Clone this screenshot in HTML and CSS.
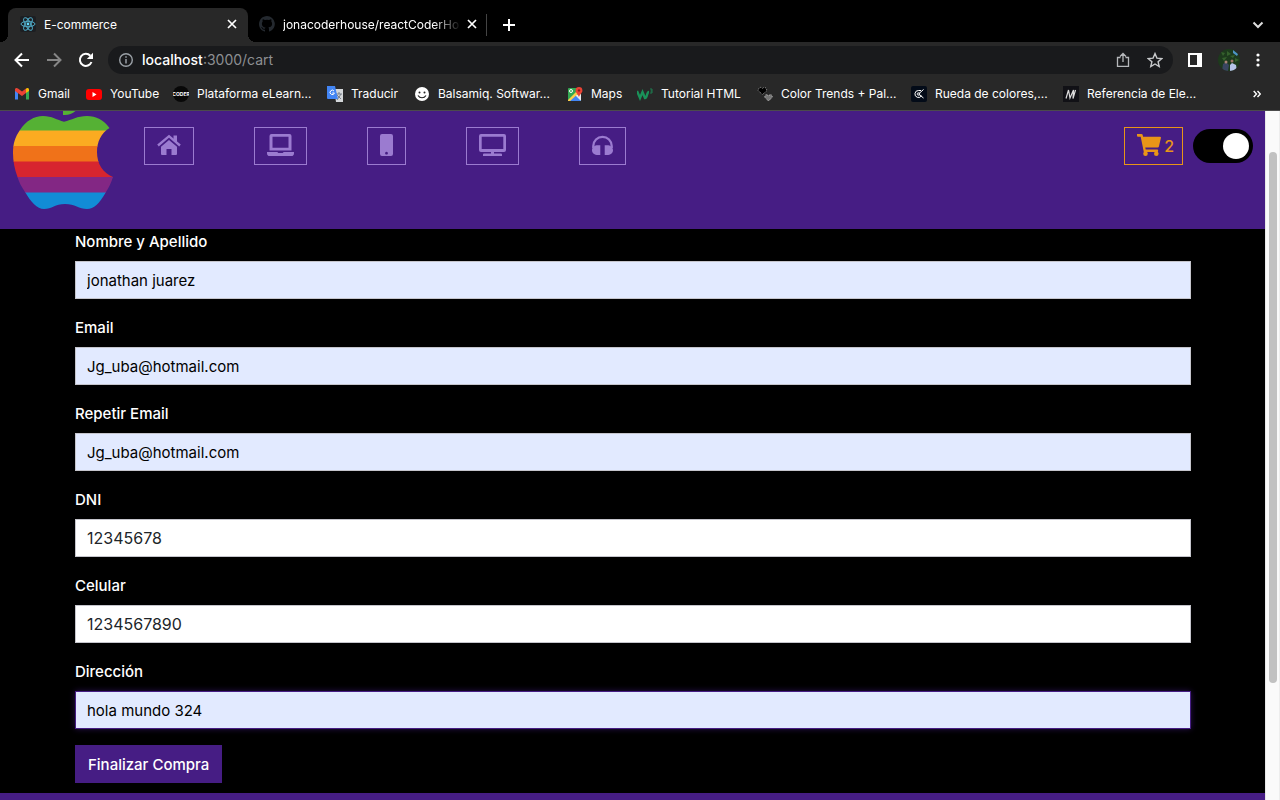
FILE: index.html
```html
<!DOCTYPE html>
<html lang="es">
<head>
<meta charset="utf-8">
<title>E-commerce</title>
<link rel="stylesheet" href="styles.css">
</head>
<body>
<div class="window">
  <div class="tabs">
    <div class="tab tab-active">
      <svg class="ico" viewBox="0 0 16 16"><rect width="16" height="16" rx="2" fill="#1c1e22"/><g fill="none" stroke="#4fa9c4" stroke-width="1"><ellipse cx="8" cy="8" rx="7" ry="2.7"/><ellipse cx="8" cy="8" rx="7" ry="2.7" transform="rotate(60 8 8)"/><ellipse cx="8" cy="8" rx="7" ry="2.7" transform="rotate(120 8 8)"/></g><circle cx="8" cy="8" r="1.4" fill="#61dafb"/></svg>
      <span class="tab-title">E-commerce</span>
      <button class="plain close" aria-label="Cerrar"><svg width="10" height="10" viewBox="0 0 10 10"><path d="M1 1l8 8M9 1l-8 8" stroke="#fff" stroke-width="1.7"/></svg></button>
    </div>
    <div class="tab tab-other">
      <svg class="ico" viewBox="0 0 16 16"><path fill="#24292f" d="M8 0C3.6 0 0 3.6 0 8c0 3.5 2.3 6.5 5.5 7.6.4.1.5-.2.5-.4v-1.5c-2.2.5-2.7-.9-2.7-.9-.4-.9-.9-1.2-.9-1.2-.7-.5.1-.5.1-.5.8.1 1.2.8 1.2.8.7 1.2 1.9.9 2.3.7.1-.5.3-.9.5-1.1-1.8-.2-3.6-.9-3.6-4 0-.9.3-1.6.8-2.1-.1-.2-.4-1 .1-2.1 0 0 .7-.2 2.2.8a7.7 7.7 0 0 1 4 0c1.5-1 2.2-.8 2.2-.8.4 1.1.2 1.9.1 2.1.5.6.8 1.3.8 2.1 0 3.1-1.9 3.7-3.7 3.9.3.3.6.8.6 1.5v2.2c0 .2.1.5.6.4A8 8 0 0 0 8 0z"/></svg>
      <span class="tab-title fade">jonacoderhouse/reactCoderHo</span>
      <button class="plain close" aria-label="Cerrar"><svg width="10" height="10" viewBox="0 0 10 10"><path d="M1 1l8 8M9 1l-8 8" stroke="#fff" stroke-width="1.7"/></svg></button>
    </div>
    <button class="plain add" aria-label="Nueva"><svg width="12" height="12" viewBox="0 0 12 12"><path d="M6 0v12M0 6h12" stroke="#fff" stroke-width="2"/></svg></button>
    <button class="plain more-tabs" aria-label="Buscar"><svg width="12" height="8" viewBox="0 0 12 8"><path d="M1.5 1.5L6 6l4.500-4.500" fill="none" stroke="#ddd" stroke-width="2"/></svg></button>
  </div>

  <div class="toolbar">
    <button class="plain" aria-label="Atrás"><svg class="ico" viewBox="0 0 16 16"><path d="M15 8H2M8 1.5L1.5 8 8 14.5" fill="none" stroke="#fff" stroke-width="2"/></svg></button>
    <button class="plain" aria-label="Adelante"><svg class="ico" viewBox="0 0 16 16"><path d="M1 8h13M8 1.5L14.5 8 8 14.5" fill="none" stroke="#868686" stroke-width="2"/></svg></button>
    <button class="plain" aria-label="Recargar"><svg class="ico" viewBox="0 0 16 16"><path d="M13.5 10A6 6 0 1 1 12.3 3.8" fill="none" stroke="#fff" stroke-width="2"/><path d="M15 0.8V7H8.8z" fill="#fff"/></svg></button>
    <div class="address">
      <svg class="ico" viewBox="0 0 16 16"><circle cx="8" cy="8" r="6.3" fill="none" stroke="#9aa0a6" stroke-width="1.4"/><path d="M8 7v4.500M8 4.3v1.5" stroke="#9aa0a6" stroke-width="1.5"/></svg>
      <span class="url"><b>localhost</b>:3000/cart</span>
      <button class="plain" aria-label="Compartir"><svg class="ico" viewBox="0 0 16 16"><path d="M5.500 5.500h-3v8.800h11V5.500h-3M8 10V1.800M5 4.500l3-3 3 3" fill="none" stroke="#b5b7ba" stroke-width="1.3"/></svg></button>
      <button class="plain" aria-label="Favorito"><svg class="ico" viewBox="0 0 16 16"><path d="M8 1.600l1.900 4.500 4.900.4-3.700 3.200 1.100 4.800L8 12l-4.200 2.500 1.100-4.800L1.200 6.500l4.900-.4z" fill="none" stroke="#c8cacc" stroke-width="1.4"/></svg></button>
    </div>
    <button class="plain" aria-label="Panel lateral"><svg width="14" height="14" viewBox="0 0 14 14"><path d="M0 0h14v14H0zM2 2v10h7V2z" fill="#fff" fill-rule="evenodd"/></svg></button>
    <button class="plain" aria-label="Perfil"><svg width="22" height="22" viewBox="0 0 22 22"><clipPath id="av"><circle cx="11" cy="11" r="11"/></clipPath><g clip-path="url(#av)"><rect width="22" height="22" fill="#1d3a1c"/><path d="M3 3l4 1-2 3zM9 2l4 3-4 2zM4 9l5-1-3 4zM12 7l5-1-2 3zM17 9l4 2-4 2z" fill="#35612c"/><path d="M15 1l5 4-1 2-4-3z" fill="#4d95c4"/><path d="M5 15l3-2 3 3-1 6H4z" fill="#39455f"/><circle cx="8" cy="13" r="1.500" fill="#a98275"/><path d="M12 16l2-2 4 2 1 6h-7z" fill="#b6c5e8"/><circle cx="14" cy="12" r="1.500" fill="#9d7768"/></g></svg></button>
    <button class="plain" aria-label="Menú"><svg width="4" height="14" viewBox="0 0 4 14" fill="#fff"><circle cx="2" cy="2" r="1.6"/><circle cx="2" cy="7" r="1.6"/><circle cx="2" cy="12" r="1.6"/></svg></button>
  </div>

  <nav class="bookmarks" aria-label="Marcadores">
    <a href="#"><svg class="ico" viewBox="0 0 16 16"><path d="M1 3v10.500h3V7z" fill="#4285f4"/><path d="M15 3v10.500h-3V7z" fill="#34a853"/><path d="M1 3.500C1 2 2.600 1.500 4 2.500l4 3 4-3V7L8 10 1 5z" fill="#ea4335"/><path d="M12 2.500c1.400-1 3-.5 3 1V5l-3 2z" fill="#fbbc04"/></svg>Gmail</a>
    <a href="#"><svg class="ico" viewBox="0 0 16 16"><rect y="3" width="16" height="11" rx="3" fill="#f00"/><path d="M6.500 6v5l4-2.500z" fill="#fff"/></svg>YouTube</a>
    <a href="#"><svg class="ico" viewBox="0 0 16 16"><circle cx="8" cy="8" r="8" fill="#080808"/><text x="8" y="10" class="coder" text-anchor="middle">CODER</text></svg>Plataforma eLearn...</a>
    <a href="#"><svg class="ico" viewBox="0 0 16 16"><path d="M7 3h9v13H9z" fill="#d4d7da"/><path d="M9 8h6M12 6v2M10 14l4-6M10 9l4 4" stroke="#777e88" fill="none"/><path d="M0 0h8l3 13H1q-1 0-1-1z" fill="#4285f4"/><path d="M7 5a2.200 2.200 0 1 0 .4 2H5.300" stroke="#fff" fill="none"/></svg>Traducir</a>
    <a href="#"><svg class="ico" viewBox="0 0 16 16"><circle cx="8" cy="8" r="7" fill="#fff"/><circle cx="5.500" cy="6.500" r="1" fill="#222"/><circle cx="10.500" cy="6.500" r="1" fill="#222"/><path d="M4 9.500c2 3 6 3 8 0" fill="none" stroke="#222" stroke-width="1.2"/></svg>Balsamiq. Softwar...</a>
    <a href="#"><svg class="ico" viewBox="0 0 16 16"><rect x="1" y="2" width="13" height="13" rx="1" fill="#34a853"/><path d="M14 8v6q0 1-1 1H3l6-6z" fill="#e8eaed"/><path d="M8 9l6 6H3z" fill="#4285f4"/><path d="M10 5l2 2-9 8H1v-1z" fill="#fbd04b"/><path d="M12 1a3.400 3.400 0 0 0-3.400 3.400C8.600 7 11 7.500 12 11c1-3.500 3.400-4 3.400-6.600A3.400 3.400 0 0 0 12 1z" fill="#ea4335"/><circle cx="12" cy="4.400" r="1.200" fill="#8c1d18"/><circle cx="4" cy="5" r="1.500" fill="none" stroke="#fff"/></svg>Maps</a>
    <a href="#"><svg class="ico" viewBox="0 0 16 16"><path d="M0 5l3 7 2.500-6L8 12c2.500 0 1.500-6 4-6" fill="none" stroke="#1a9159" stroke-width="2.4"/><path d="M13 3h2v4h-2M13.500 5H15" fill="none" stroke="#1a9159" stroke-width=".8"/></svg>Tutorial HTML</a>
    <a href="#"><svg class="ico" viewBox="0 0 16 16"><path d="M5.500 8.500L1 4.500 2 2l2-.8L5.500 2.500 7 1.200l2 .8 1 2.500z" fill="#000" stroke="#aaa" stroke-dasharray="1 1" stroke-width=".8"/><path d="M11.500 15L7.500 11 9 8.500l2.500 1 2.500-1 1.500 2.500z" fill="#777" stroke="#ddd" stroke-dasharray="1 1" stroke-width=".8"/></svg>Color Trends + Pal...</a>
    <a href="#"><svg class="ico" viewBox="0 0 16 16"><rect width="16" height="16" rx="2" fill="#030b18"/><path d="M10 4.500H7.500a3.500 3.500 0 1 0 3 5.200M12.500 3.500L7.500 8l5 4" fill="none" stroke="#fff"/><circle cx="7.500" cy="8" r="1.300" fill="none" stroke="#fff" stroke-width=".8"/></svg>Rueda de colores,...</a>
    <a href="#"><svg class="ico" viewBox="0 0 16 16"><rect width="16" height="16" fill="#111116"/><path d="M3 12.500L5.500 4l1.500 8 3.500-8-.5 8.500L12.500 4" fill="none" stroke="#ddd" stroke-width="1.2"/></svg>Referencia de Ele...</a>
    <button class="plain overflow" aria-label="Más marcadores"><svg width="8" height="8" viewBox="0 0 8 8"><path d="M.7 1l2.800 3L.7 7M4.500 1l2.800 3-2.800 3" fill="none" stroke="#fff" stroke-width="1.4"/></svg></button>
  </nav>

  <div class="viewport">
    <div class="page">
      <header class="header">
        <svg class="logo" viewBox="0 0 100 98" role="img" aria-label="Logo">
          <clipPath id="apple"><path d="M51 10.700C59 9 64 5 74 5c9 0 17 4 22.500 12C88 22 84 31 84 41c0 12 6 21 16 25-2 6-4 10-7 15-7 12-12 17-19 17-8 0-12-5-22-5s-13 5-21 5C24 98 18 91 12 81 8 75 6 71 4.500 66 1.500 58 0 50 0 42 0 33 2 26 7 19 13 10 21 5 30 5c9 0 14 4 21 5.700z"/></clipPath>
          <path d="M50 0h12.500C59 3 55 4.500 50 4z" fill="#55b134"/>
          <g clip-path="url(#apple)">
            <rect width="100" height="20" fill="#55b134"/>
            <rect y="19.500" width="100" height="16" fill="#fbab21"/>
            <rect y="35" width="100" height="16" fill="#f07219"/>
            <rect y="50.500" width="100" height="16" fill="#d7252f"/>
            <rect y="66" width="100" height="16" fill="#832784"/>
            <rect y="81.500" width="100" height="17" fill="#128cd6"/>
          </g>
        </svg>
        <nav class="categories" aria-label="Categorías">
          <a class="cat" href="#" aria-label="Inicio"><svg width="24" height="22" viewBox="0 0 24 22"><path d="M1 11.500L12 2.200l11 9.300" fill="none" stroke="currentColor" stroke-width="2.4"/><path d="M16.500 1.500h3.500V9l-3.500-3z" fill="currentColor"/><path d="M12 6l8 6.800V20q0 1-1 1h-4.500v-6h-5v6H5q-1 0-1-1v-7.200z" fill="currentColor"/></svg></a>
          <a class="cat" href="#" aria-label="Notebooks"><svg width="27" height="22" viewBox="0 0 27 22"><path d="M4.500 0h18q2 0 2 2v14.500h-22V2q0-2 2-2zM5.500 2.700v11.100h16V2.700z" fill="currentColor" fill-rule="evenodd"/><path d="M0 18h10.500q.2 1 1 1h4q.8 0 1-1H27v1.200q0 2.800-2.800 2.800H2.800Q0 22 0 19.200z" fill="currentColor"/></svg></a>
          <a class="cat" href="#" aria-label="Celulares"><svg width="13" height="22" viewBox="0 0 13 22"><path d="M2 0h9q2 0 2 2v18q0 2-2 2H2q-2 0-2-2V2q0-2 2-2zm4.500 17.800a1.400 1.400 0 1 0 .01 0z" fill="currentColor" fill-rule="evenodd"/></svg></a>
          <a class="cat" href="#" aria-label="Monitores"><svg width="27" height="22" viewBox="0 0 27 22"><path d="M2 0h23q2 0 2 2v14q0 2-2 2H2q-2 0-2-2V2q0-2 2-2zm.7 2.700v12.200h21.600V2.700z" fill="currentColor" fill-rule="evenodd"/><path d="M12 17.500h3v2h7q1 0 1 1V22H4v-1.500q0-1 1-1h7z" fill="currentColor"/></svg></a>
          <a class="cat" href="#" aria-label="Auriculares"><svg width="21" height="22" viewBox="0 0 21 22"><path d="M1.300 14v-2a9.200 9.200 0 0 1 18.400 0v2" fill="none" stroke="currentColor" stroke-width="2.3"/><path d="M8.300 11.300V21H6c-3.500 0-6-2-6-4.800s2.500-4.900 6-4.900zM12.700 11.300V21H15c3.500 0 6-2 6-4.800s-2.500-4.900-6-4.900z" fill="currentColor"/></svg></a>
        </nav>
        <a class="cart" href="#" aria-label="Carrito"><svg width="24" height="22" viewBox="0 0 24 22"><path d="M0 0h4.500q1 0 1.200 1l.4 1.800H23q1.200 0 .9 1.200l-2 8.600q-.2.900-1.200.9H8.300l.4 2h11.600q1 0 .8 1.200l-.3 1.300H6.800L3.700 2.800H1Q0 2.800 0 1.800z" fill="currentColor"/><circle cx="8.500" cy="19.700" r="2.300" fill="currentColor"/><circle cx="19.300" cy="19.700" r="2.300" fill="currentColor"/></svg><span>2</span></a>
        <input class="toggle" type="checkbox" aria-label="Modo oscuro" checked>
      </header>

      <form class="form">
        <div class="field"><label for="nombre">Nombre y Apellido</label><input class="filled" id="nombre" type="text" value="jonathan juarez"></div>
        <div class="field"><label for="email">Email</label><input class="filled" id="email" type="email" value="Jg_uba@hotmail.com"></div>
        <div class="field"><label for="email2">Repetir Email</label><input class="filled" id="email2" type="email" value="Jg_uba@hotmail.com"></div>
        <div class="field"><label for="dni">DNI</label><input id="dni" type="text" value="12345678"></div>
        <div class="field"><label for="celular">Celular</label><input id="celular" type="text" value="1234567890"></div>
        <div class="field"><label for="direccion">Dirección</label><input class="filled current" id="direccion" type="text" value="hola mundo 324"></div>
        <button class="submit" type="button">Finalizar Compra</button>
      </form>
      <footer class="footer"></footer>
    </div>
    <div class="scrollbar"><div class="thumb"></div></div>
  </div>
</div>
</body>
</html>
```
FILE: styles.css
```css
* { box-sizing: border-box; }

body {
  margin: 0;
  background: #000;
  font-family: Inter, "Liberation Sans", sans-serif;
}

.window {
  display: flex;
  flex-direction: column;
  height: 100vh;
  overflow: hidden;
  color: #fff;
  font-size: 12px;
}

svg { display: block; flex: none; }
.ico { width: 16px; height: 16px; }

.plain {
  display: flex;
  padding: 0;
  border: 0;
  background: none;
}

/* Tab strip */
.tabs {
  display: flex;
  align-items: center;
  flex: none;
  height: 42px;
  padding: 8px 16px 0 8px;
}
.tab {
  display: flex;
  align-items: center;
  gap: 8px;
  height: 34px;
  width: 240px;
  padding: 0 11px 2px 12px;
}
.tab-active {
  position: relative;
  border-radius: 8px 8px 0 0;
  background: #282828;
}
.tab-active::before,
.tab-active::after {
  content: "";
  position: absolute;
  bottom: 0;
  width: 8px;
  height: 8px;
}
.tab-active::before {
  left: -8px;
  background: radial-gradient(circle at 0 0, #000 8px, #282828 8px);
}
.tab-active::after {
  right: -8px;
  background: radial-gradient(circle at 100% 0, #000 8px, #282828 8px);
}
.tab-other {
  width: 239px;
  padding: 0 10px 2px 11px;
  border-right: 1px solid #000;
  border-image: linear-gradient(#000 7px, #444 7px, #444 27px, #000 27px) 1;
}
.tab-title { flex: 1; white-space: nowrap; }
.fade { mask-image: linear-gradient(90deg, #000 150px, transparent 178px); }
.add { margin-left: 16px; }
.more-tabs { margin-left: auto; }

/* Toolbar */
.toolbar {
  display: flex;
  align-items: center;
  gap: 16px;
  flex: none;
  height: 36px;
  padding: 0 20px 0 14px;
  background: #282828;
}
.address {
  display: flex;
  align-items: center;
  flex: 1;
  gap: 16px;
  height: 28px;
  margin: 0 -1px 0 -2px;
  padding: 0 10px;
  border-radius: 14px;
  background: #191a1c;
}
.url {
  flex: 1;
  margin-left: -8px;
  padding-bottom: 2px;
  color: #8d8f92;
  font-size: 14px;
}
.url b { color: #fff; font-weight: 500; }

/* Bookmarks */
.bookmarks {
  display: grid;
  grid-template-columns: 72px 87px 154px 87px 153px 70px 120px 154px 152px 1fr auto;
  align-items: center;
  flex: none;
  height: 33px;
  padding: 0 19px 1px 14px;
  border-bottom: 1px solid #4b4b4b;
  background: #282828;
}
.bookmarks a {
  display: flex;
  align-items: center;
  gap: 8px;
  color: #fff;
  text-decoration: none;
  white-space: nowrap;
}
.coder { fill: #fff; font-size: 5px; font-weight: 700; }

/* Page */
.viewport { display: flex; flex: 1; min-height: 0; }
.page {
  display: flex;
  flex-direction: column;
  flex: 1;
  overflow: hidden;
  font-size: 16px;
}
.header {
  display: flex;
  align-items: flex-start;
  flex: none;
  height: 118px;
  padding: 0 12px 0 13px;
  background: #461d84;
}
.logo { width: 100px; height: 98px; }
.categories { display: flex; gap: 60px; margin: 16px auto 0 31px; }
.cat,
.cart {
  display: flex;
  align-items: center;
  height: 38px;
  padding: 0 12px 2px;
  border: 1px solid #9b7bd0;
  color: #9b7bd0;
}
.cart {
  gap: 3px;
  margin: 16px 10px 0 0;
  padding-right: 8px;
  border-color: #e99518;
  color: #e99518;
  font-weight: 500;
  text-decoration: none;
}
.cart span { padding-top: 2px; }
.toggle {
  appearance: none;
  display: flex;
  align-items: center;
  justify-content: flex-end;
  width: 60px;
  height: 34px;
  margin: 18px 0 0;
  padding: 4px;
  border-radius: 17px;
  background: #000;
}
.toggle::before {
  content: "";
  width: 26px;
  height: 26px;
  border-radius: 50%;
  background: #fff;
}

/* Checkout form */
.form { flex: none; padding: 0 74px 10px 75px; }
.field {
  display: flex;
  flex-direction: column;
  gap: 7px;
  margin-bottom: 16px;
}
.field label { font-size: 15px; font-weight: 500; line-height: 25px; }
.field input {
  width: 100%;
  height: 38px;
  padding: 0 11px;
  border: 1px solid #c5c5cc;
  border-radius: 0;
  outline: 0;
  background: #fff;
  color: #212529;
  font-family: inherit;
  font-size: 16px;
}
.field .filled { background: #e2eaff; color: #000; font-size: 15px; }
.field .current { border-color: #461d84; box-shadow: 0 0 6px #28104c; }
.submit {
  height: 38px;
  padding: 0 13px;
  border: 0;
  background: #461d84;
  color: #fff;
  font-family: inherit;
  font-size: 15px;
  font-weight: 500;
}
.footer { flex: 1; background: #461d84; }

/* Scrollbar */
.scrollbar {
  flex: none;
  width: 15px;
  padding: 41px 3px 0;
  border-left: 1px solid #e8e8e8;
  border-right: 1px solid #ededed;
  background: #fafafa;
}
.thumb { width: 8px; height: 82%; border-radius: 4px; background: #c1c1c1; }
```
